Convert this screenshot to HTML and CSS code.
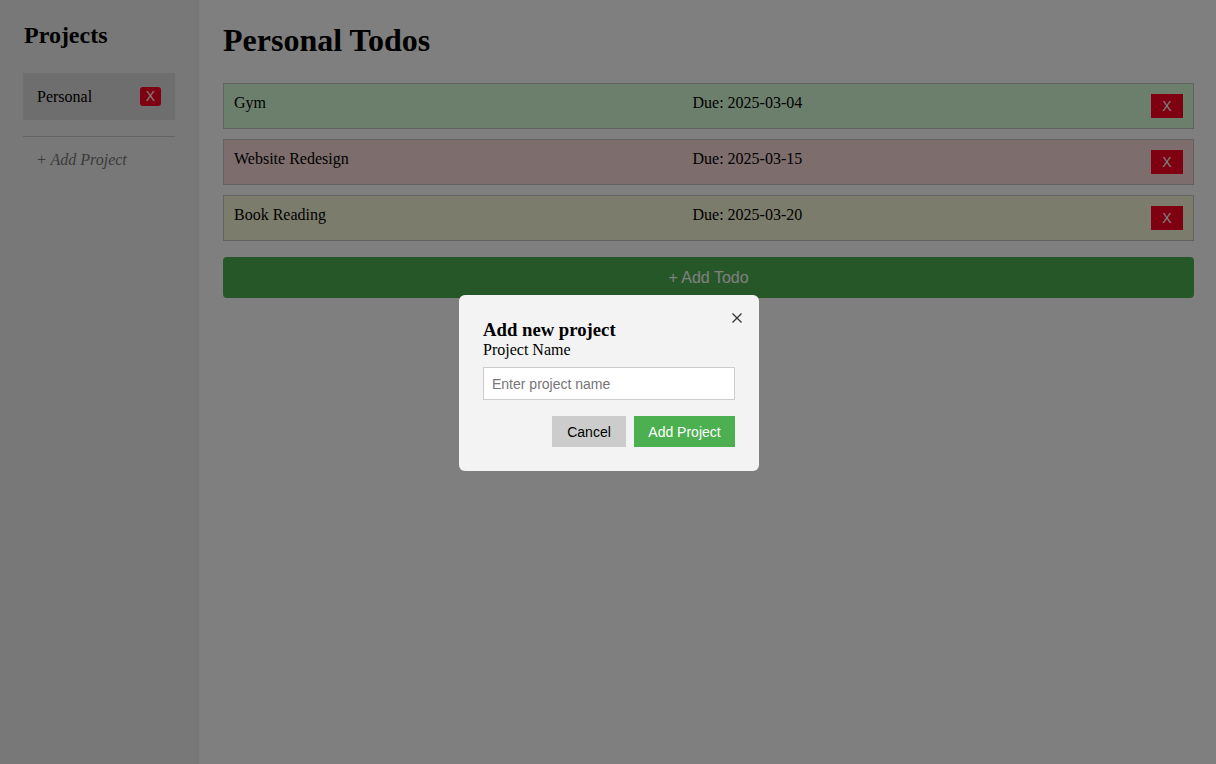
FILE: index.html
```html
<!DOCTYPE html>
<html lang="en">
<head>
<meta charset="utf-8">
<title>Todo</title>
<link rel="stylesheet" href="styles.css">
</head>
<body>
<div class="app">
  <aside class="sidebar">
    <h2 class="sidebar-title">Projects</h2>
    <ul class="project-list">
      <li class="project-item">
        <span>Personal</span>
        <button class="project-delete">X</button>
      </li>
    </ul>
    <hr class="divider">
    <div class="add-project">+ Add Project</div>
  </aside>
  <main class="main">
    <h1 class="main-title">Personal Todos</h1>
    <div class="todo-list">
      <div class="todo todo-low">
        <span class="todo-title">Gym</span>
        <span class="todo-due">Due: 2025-03-04</span>
        <button class="todo-delete">X</button>
      </div>
      <div class="todo todo-high">
        <span class="todo-title">Website Redesign</span>
        <span class="todo-due">Due: 2025-03-15</span>
        <button class="todo-delete">X</button>
      </div>
      <div class="todo todo-medium">
        <span class="todo-title">Book Reading</span>
        <span class="todo-due">Due: 2025-03-20</span>
        <button class="todo-delete">X</button>
      </div>
    </div>
    <button class="add-todo">+ Add Todo</button>
  </main>
</div>
<div class="overlay">
  <div class="modal">
    <button class="modal-close" aria-label="Close">
      <svg width="10" height="10" viewBox="0 0 10 10"><path d="M0.5 0.5 L9.5 9.5 M9.5 0.5 L0.5 9.5" stroke="#333" stroke-width="1.3" fill="none"/></svg>
    </button>
    <h3 class="modal-title">Add new project</h3>
    <label class="modal-label" for="pname">Project Name</label>
    <input id="pname" class="modal-input" type="text" placeholder="Enter project name">
    <div class="modal-actions">
      <button class="btn btn-cancel">Cancel</button>
      <button class="btn btn-primary">Add Project</button>
    </div>
  </div>
</div>
</body>
</html>
```

FILE: styles.css
```css
* { box-sizing: border-box; }
html, body { margin: 0; padding: 0; }
body {
  font-family: "Liberation Serif", "Times New Roman", serif;
  font-size: 16px;
  color: #000;
  background: #fff;
}
.app {
  display: flex;
  height: 100vh;
}
.sidebar {
  width: 199px;
  flex: 0 0 199px;
  background: #f0f0f0;
  padding: 22px 24px 22px 23px;
}
.sidebar-title {
  margin: 0 0 24px 1px;
  font-size: 24px;
  font-weight: bold;
}
.project-list {
  list-style: none;
  margin: 0;
  padding: 0;
}
.project-item {
  display: flex;
  justify-content: space-between;
  align-items: center;
  background: #dcdcdc;
  padding: 14px;
  height: 47px;
}
.project-delete {
  width: 21px;
  height: 19px;
  border: none;
  border-radius: 3px;
  background: #ff0020;
  color: #fff;
  font-family: "Liberation Sans", Arial, sans-serif;
  font-size: 14px;
  padding: 0;
  line-height: 19px;
}
.divider {
  border: none;
  border-top: 1px solid #c8c8c8;
  margin: 16px 0 0 0;
}
.add-project {
  padding: 14px 14px 0 13px;
  font-style: italic;
  color: #777;
}
.main {
  flex: 1;
  padding: 22px 22px 22px 24px;
}
.main-title {
  margin: 0 0 24px 0;
  font-size: 32px;
  font-weight: bold;
}
.todo-list {
  display: flex;
  flex-direction: column;
  gap: 10px;
}
.todo {
  display: flex;
  align-items: flex-start;
  border: 1px solid #c4c4c4;
  padding: 10px;
  height: 46px;
}
.todo-low { background: #d8ffd8; }
.todo-high { background: #fadada; }
.todo-medium { background: #f8f8d8; }
.todo-title, .todo-due {
  flex: 1;
}
.todo-delete {
  width: 32px;
  height: 24px;
  border: none;
  background: #ff0020;
  color: #fff;
  font-family: "Liberation Sans", Arial, sans-serif;
  font-size: 14px;
  padding: 0;
}
.add-todo {
  display: block;
  width: 100%;
  height: 41px;
  margin-top: 16px;
  border: none;
  border-radius: 4px;
  background: #4caf50;
  color: #fff;
  font-family: "Liberation Sans", Arial, sans-serif;
  font-size: 16px;
}
.overlay {
  position: fixed;
  inset: 0;
  background: rgba(0, 0, 0, 0.5);
  display: flex;
  align-items: center;
  justify-content: center;
}
.modal {
  position: relative;
  width: 300px;
  margin: 2px 0 0 2px;
  background: #f3f3f3;
  border-radius: 6px;
  padding: 24px;
}
.modal-close {
  position: absolute;
  top: 18px;
  right: 17px;
  width: 10px;
  height: 10px;
  padding: 0;
  border: none;
  background: transparent;
  display: flex;
}
.modal-title {
  margin: 0;
  font-size: 18.72px;
  font-weight: bold;
}
.modal-label {
  display: block;
  font-size: 16px;
}
.modal-input {
  display: block;
  width: 100%;
  height: 33px;
  margin-top: 8px;
  padding: 0 8px;
  border: 1px solid #ccc;
  background: #fff;
  font-family: "Liberation Sans", Arial, sans-serif;
  font-size: 14px;
  outline: none;
}
.modal-input::placeholder { color: #767676; }
.modal-actions {
  display: flex;
  justify-content: flex-end;
  gap: 8px;
  margin-top: 16px;
}
.btn {
  height: 31px;
  padding: 0;
  border: none;
  font-family: "Liberation Sans", Arial, sans-serif;
  font-size: 14px;
}
.btn-cancel { width: 74px; background: #ccc; color: #000; }
.btn-primary { width: 101px; background: #4caf50; color: #fff; }
```
